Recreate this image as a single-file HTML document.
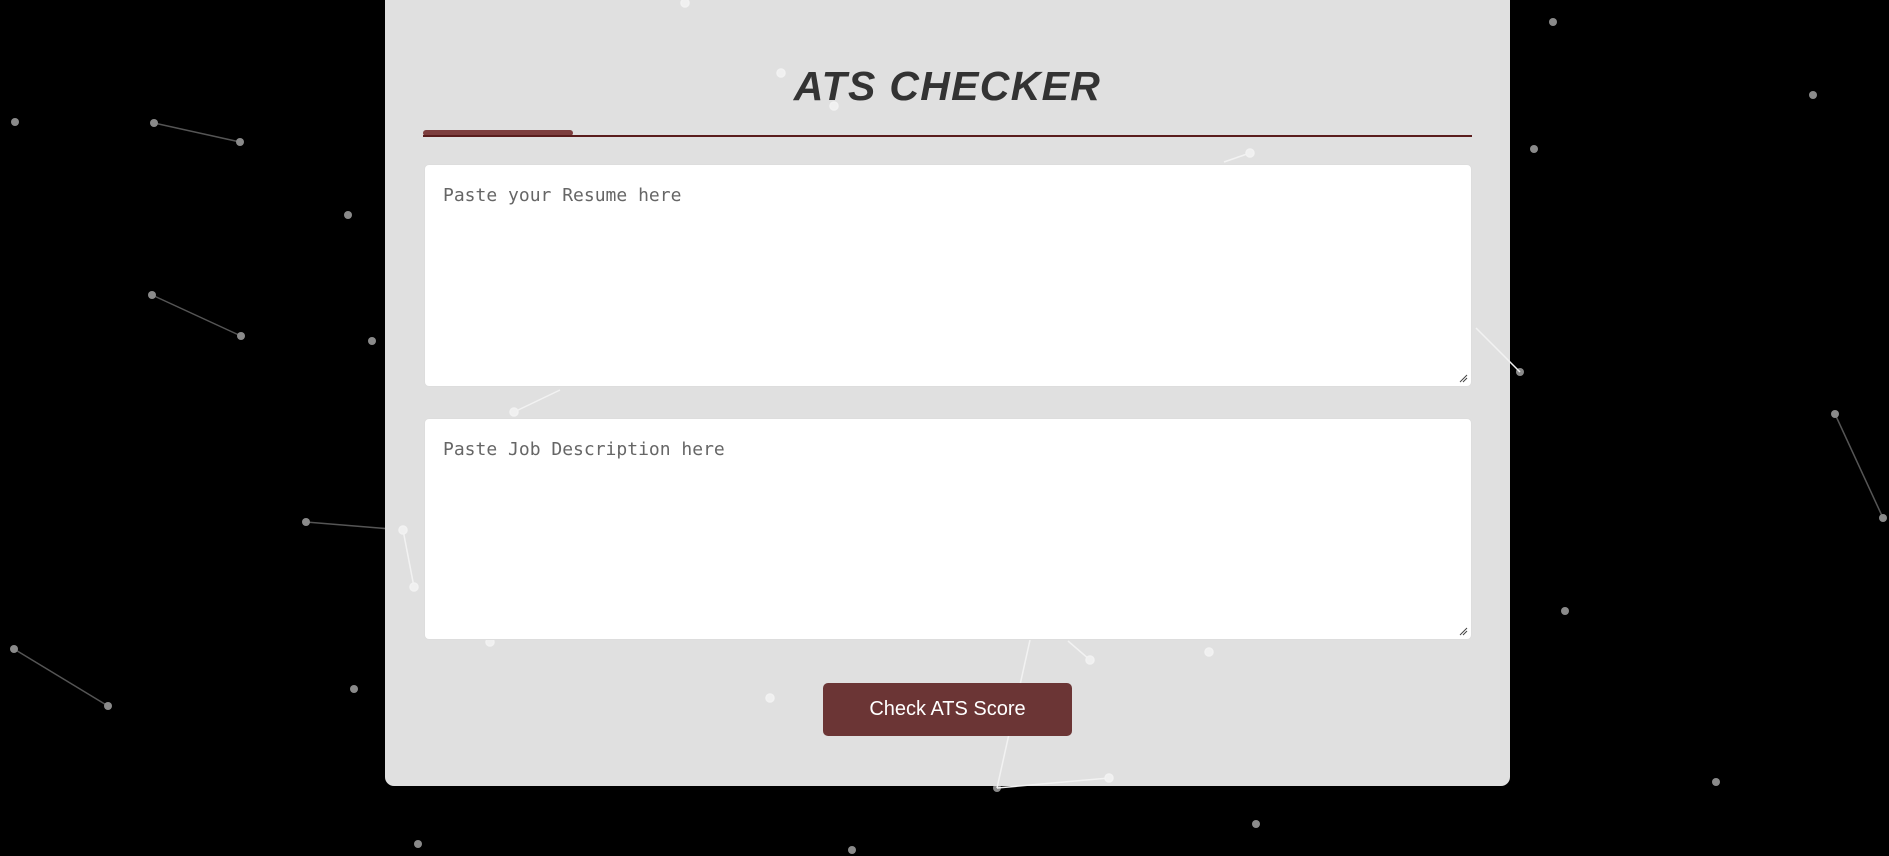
<!DOCTYPE html>
<html><head><style>
html,body{margin:0;padding:0;width:1889px;height:856px;background:#000;overflow:hidden;font-family:"Liberation Sans",sans-serif}
svg.bg{position:absolute;left:0;top:0}
.card{position:absolute;left:385px;top:-20px;width:1125px;height:806px;background:#e0e0e0;border-radius:9px}
h1{position:absolute;left:385px;width:1125px;top:63px;margin:0;text-align:center;font-size:41px;font-style:italic;font-weight:bold;color:#333;letter-spacing:1.3px}
.line{position:absolute;left:423px;top:135px;width:1049px;height:2px;background:#5a1d1d}
.acc{position:absolute;left:423px;top:130px;width:150px;height:6px;background:#7d3e3e;border-radius:3px}
.ta{position:absolute;left:424px;width:1048px;background:#fff;border:1px solid #ddd;border-radius:5px;box-sizing:border-box;padding:20px 18px;font-family:"DejaVu Sans Mono","Liberation Mono",monospace;font-size:18px;color:#666}
.ta svg{position:absolute;right:3px;bottom:3px}
.btn{position:absolute;left:823px;top:683px;width:249px;height:53px;background:#6b3535;border-radius:5px;color:#fff;font-size:20px;text-align:center;line-height:53px}
</style></head><body>
<svg class="bg" width="1889" height="856">
<g stroke="#555" stroke-width="1.5">
<line x1="154" y1="123" x2="240" y2="142"/><line x1="152" y1="295" x2="241" y2="336"/>
<line x1="306" y1="522" x2="403" y2="530"/><line x1="14" y1="649" x2="108" y2="706"/>
<line x1="1835" y1="414" x2="1883" y2="518"/>
</g>
<g fill="#8a8a8a">
<circle cx="1553" cy="22" r="4"/><circle cx="1813" cy="95" r="4"/><circle cx="15" cy="122" r="4"/>
<circle cx="154" cy="123" r="4"/><circle cx="240" cy="142" r="4"/><circle cx="1534" cy="149" r="4"/>
<circle cx="348" cy="215" r="4"/><circle cx="152" cy="295" r="4"/><circle cx="241" cy="336" r="4"/>
<circle cx="372" cy="341" r="4"/><circle cx="1520" cy="372" r="4"/><circle cx="1835" cy="414" r="4"/>
<circle cx="1883" cy="518" r="4"/><circle cx="306" cy="522" r="4"/><circle cx="1565" cy="611" r="4"/>
<circle cx="14" cy="649" r="4"/><circle cx="108" cy="706" r="4"/><circle cx="354" cy="689" r="4"/>
<circle cx="1716" cy="782" r="4"/><circle cx="997" cy="788" r="4"/><circle cx="1256" cy="824" r="4"/>
<circle cx="418" cy="844" r="4"/><circle cx="852" cy="850" r="4"/>
</g></svg>
<div class="card"></div>
<svg class="bg" width="1889" height="856">
<g stroke="#f2f2f2" stroke-width="1.5" fill="#f0f0f0">
<line x1="1224" y1="162" x2="1250" y2="153"/><circle cx="1250" cy="153" r="4"/>
<line x1="403" y1="530" x2="414" y2="587"/><circle cx="403" cy="530" r="4"/><circle cx="414" cy="587" r="4"/>
<line x1="1068" y1="641" x2="1090" y2="660"/><circle cx="1090" cy="660" r="4"/>
<line x1="997" y1="788" x2="1109" y2="778"/><line x1="997" y1="788" x2="1030" y2="640"/>
<line x1="1476" y1="328" x2="1520" y2="372"/><line x1="514" y1="412" x2="560" y2="390"/>
<circle cx="1109" cy="778" r="4"/><circle cx="770" cy="698" r="4"/><circle cx="1209" cy="652" r="4"/>
<circle cx="490" cy="642" r="4"/><circle cx="514" cy="412" r="4"/><circle cx="685" cy="3" r="4"/>
<circle cx="781" cy="73" r="4"/><circle cx="834" cy="106" r="4"/>
</g></svg>
<h1>ATS CHECKER</h1>
<div class="acc"></div><div class="line"></div>
<div class="ta" style="top:164px;height:223px">Paste your Resume here<svg width="9" height="9"><path d="M1 8L8 1M4 8L8 4" stroke="#444" stroke-width="1"/></svg></div>
<div class="ta" style="top:418px;height:222px">Paste Job Description here<svg width="9" height="9"><path d="M1 8L8 1M4 8L8 4" stroke="#444" stroke-width="1"/></svg></div>
<div class="btn">Check ATS Score</div>
</body></html>
